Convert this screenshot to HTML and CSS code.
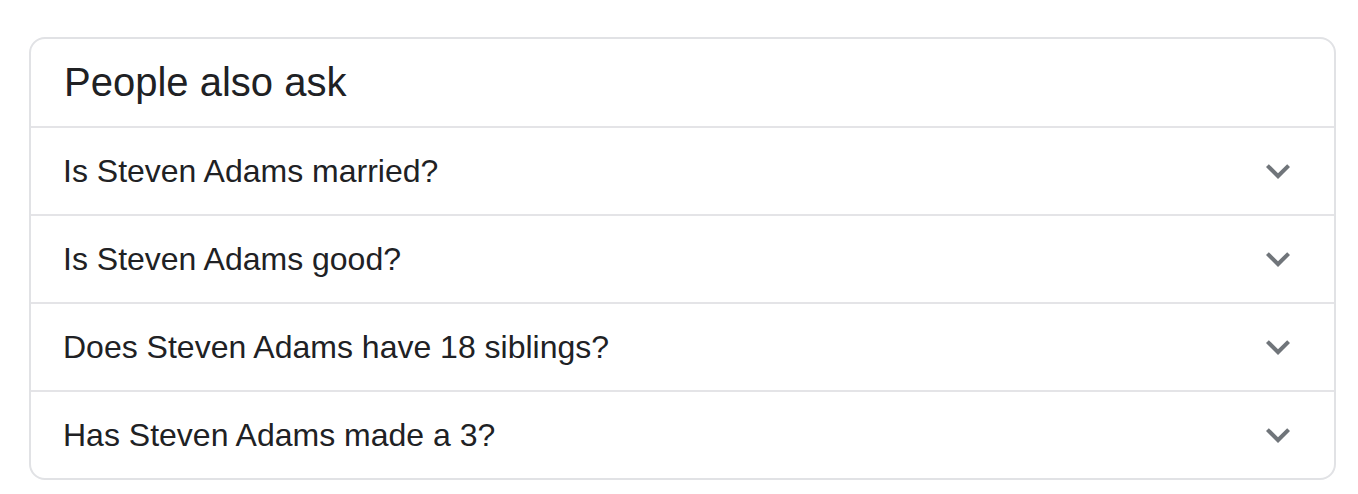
FILE: index.html
```html
<!DOCTYPE html>
<html>
<head>
<meta charset="utf-8">
<link rel="stylesheet" href="styles.css">
</head>
<body>
<div class="card">
  <div class="header">People also ask</div>
  <div class="row"><span class="q">Is Steven Adams married?</span><svg class="chev" viewBox="0 0 24 24"><path d="M16.59 8.59L12 13.17 7.41 8.59 6 10l6 6 6-6z"/></svg></div>
  <div class="row"><span class="q">Is Steven Adams good?</span><svg class="chev" viewBox="0 0 24 24"><path d="M16.59 8.59L12 13.17 7.41 8.59 6 10l6 6 6-6z"/></svg></div>
  <div class="row"><span class="q">Does Steven Adams have 18 siblings?</span><svg class="chev" viewBox="0 0 24 24"><path d="M16.59 8.59L12 13.17 7.41 8.59 6 10l6 6 6-6z"/></svg></div>
  <div class="row"><span class="q">Has Steven Adams made a 3?</span><svg class="chev" viewBox="0 0 24 24"><path d="M16.59 8.59L12 13.17 7.41 8.59 6 10l6 6 6-6z"/></svg></div>
</div>
</body>
</html>
```
FILE: styles.css
```css
html, body {
  margin: 0;
  padding: 0;
  background: #fff;
}
body {
  padding: 37px 22px 0 29px;
  font-family: "Liberation Sans", Arial, sans-serif;
  color: #202124;
}
.card {
  border: 2px solid #e1e2e5;
  border-radius: 16px;
  display: flex;
  flex-direction: column;
}
.header {
  height: 87px;
  display: flex;
  align-items: center;
  padding: 0 32px 0 33px;
  font-size: 40px;
  border-bottom: 2px solid #e4e4e7;
}
.row {
  height: 86px;
  display: flex;
  align-items: center;
  justify-content: space-between;
  padding: 0 32px;
  font-size: 32px;
  border-bottom: 2px solid #e4e4e7;
}
.row:last-child {
  border-bottom: none;
}
.chev {
  width: 48px;
  height: 48px;
  fill: #70757a;
}
```
